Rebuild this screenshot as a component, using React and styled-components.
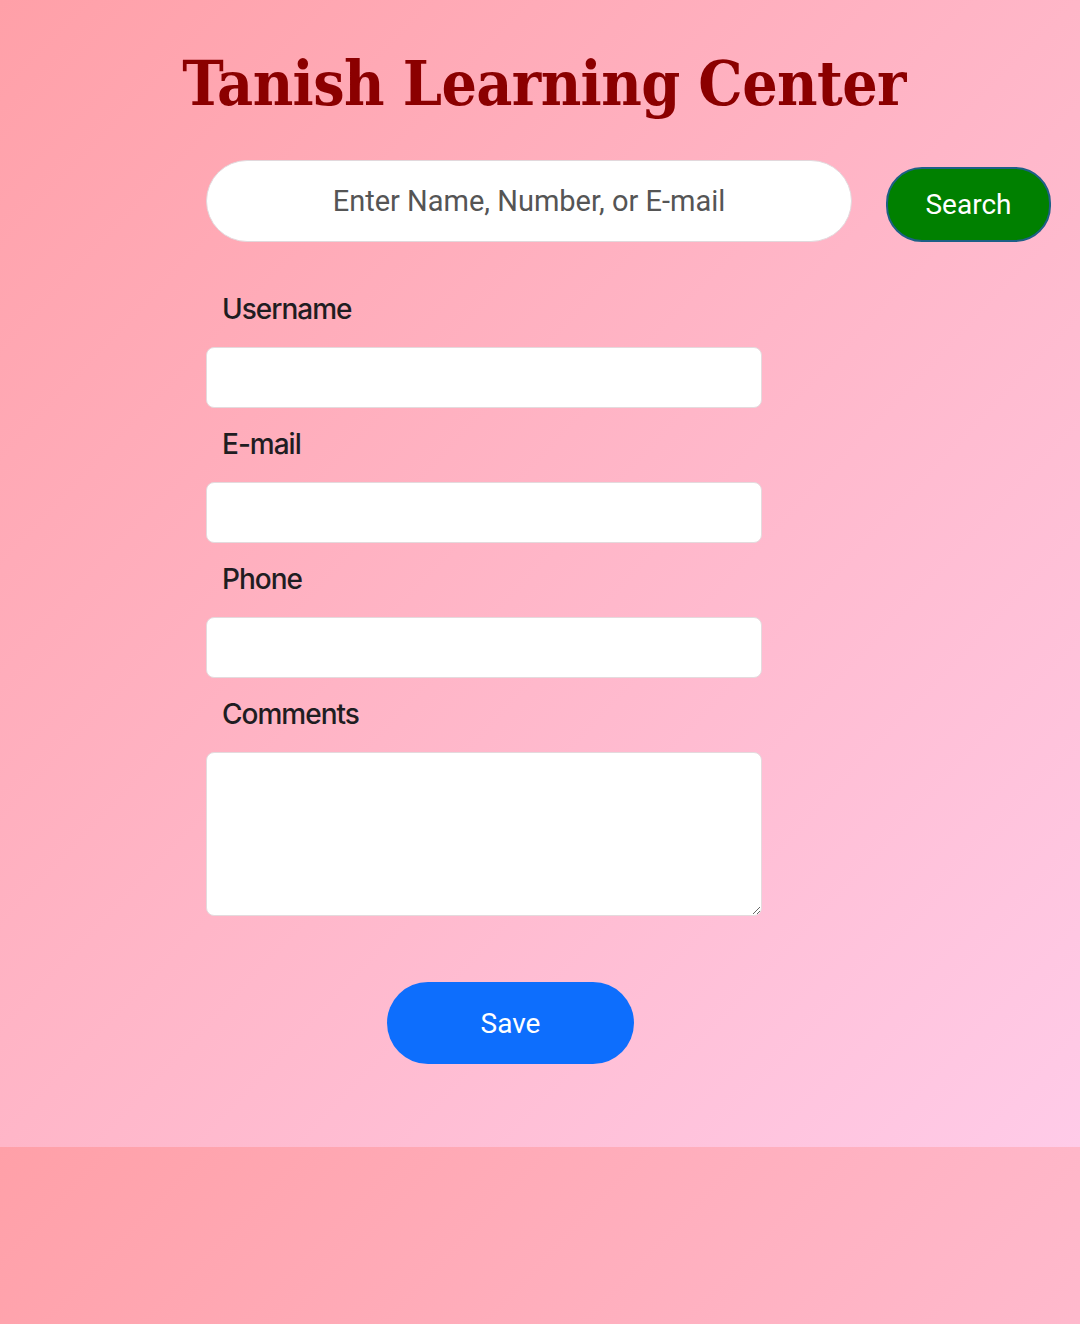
import React from "react";
import styled, { createGlobalStyle } from "styled-components";

const GlobalStyle = createGlobalStyle`
    html {
        background: linear-gradient(to bottom right, #ffa0a8 0%, #ffb6c8 50%, #ffcbe8 100%);
        background-size: 100% 1147px;
        background-repeat: repeat-y;
    }
    body {
        margin: 0;
        font-family: Roboto, "Liberation Sans", sans-serif;
    }
`;

const Page = styled.div`
    display: flex;
    flex-direction: column;
    height: 1147px;
    padding-top: 46px;
    box-sizing: border-box;
`;

const Title = styled.h1`
    margin: 0;
    text-align: center;
    padding-left: 8px;
    font-family: "DejaVu Serif Condensed", "DejaVu Serif", "Liberation Serif", serif;
    font-stretch: condensed;
    font-weight: bold;
    font-size: 62px;
    line-height: 76px;
    letter-spacing: -0.6px;
    color: #8b0000;
`;

const SearchRow = styled.div`
    display: flex;
    align-items: center;
    gap: 34px;
    margin: 37px 0 0 206px;
`;

const SearchInput = styled.input`
    width: 646px;
    height: 82px;
    box-sizing: border-box;
    border: 1.5px solid #e2d8dc;
    border-radius: 41px;
    background: #fff;
    text-align: center;
    font-family: Roboto, sans-serif;
    font-size: 29px;
    outline: none;
    &::placeholder {
        color: #555;
    }
`;

const SearchButton = styled.button`
    width: 165px;
    height: 75px;
    margin-top: 8px;
    box-sizing: border-box;
    border: 2px solid #1d5f86;
    border-radius: 36px;
    background: #008000;
    color: #fff;
    font-family: Roboto, sans-serif;
    font-size: 28px;
`;

const Form = styled.form`
    display: flex;
    flex-direction: column;
    width: 556px;
    margin: 50px 0 0 206px;
`;

const Label = styled.label`
    margin: 0 0 20px 16px;
    font-family: Inter, sans-serif;
    font-weight: 500;
    font-size: 28px;
    letter-spacing: -1px;
    color: #1f1d22;
    line-height: 35px;
`;

const Field = styled.input`
    height: 61px;
    box-sizing: border-box;
    margin-bottom: 19px;
    border: 1.5px solid #e4dadd;
    border-radius: 8px;
    background: #fff;
    outline: none;
`;

const Comments = styled.textarea`
    height: 164px;
    box-sizing: border-box;
    border: 1.5px solid #e4dadd;
    border-radius: 8px;
    background: #fff;
    outline: none;
`;

const SaveButton = styled.button`
    align-self: center;
    width: 247px;
    height: 82px;
    margin-top: 66px;
    margin-left: 53px;
    border: none;
    border-radius: 41px;
    background: #0d6efd;
    color: #fff;
    font-family: Roboto, sans-serif;
    font-size: 28px;
`;

export default function App() {
    return (
        <Page>
            <GlobalStyle />
            <Title>Tanish Learning Center</Title>
            <SearchRow>
                <SearchInput placeholder="Enter Name, Number, or E-mail" />
                <SearchButton type="button">Search</SearchButton>
            </SearchRow>
            <Form onSubmit={e => e.preventDefault()}>
                <Label>Username</Label>
                <Field />
                <Label>E-mail</Label>
                <Field />
                <Label>Phone</Label>
                <Field />
                <Label>Comments</Label>
                <Comments />
                <SaveButton type="submit">Save</SaveButton>
            </Form>
        </Page>
    );
}
